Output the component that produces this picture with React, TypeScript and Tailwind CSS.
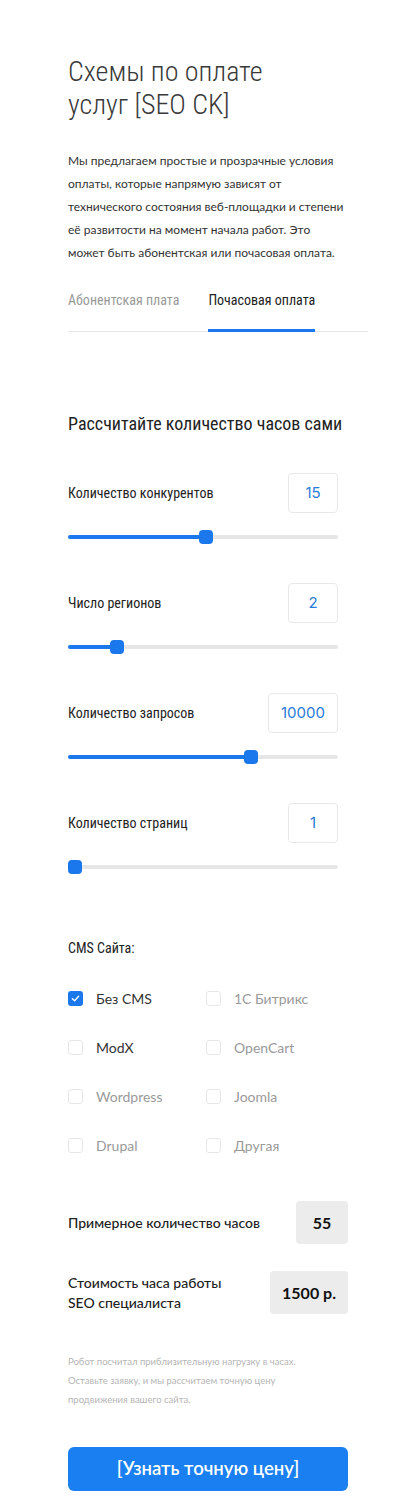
import { useState } from "react";

const cond = "font-['Liberation_Sans_Narrow','Roboto_Condensed',Roboto,sans-serif]";
const lato = "font-['Lato','Noto_Sans',sans-serif]";

interface SliderRowProps {
  label: string;
  value: string;
  pct: number;
  wide?: boolean;
}

const SliderRow: React.FC<SliderRowProps> = ({ label, value, pct, wide }) => (
  <div className="h-[110px] flex flex-col">
    <div className="flex items-center justify-between h-[40px]">
      <span className={`${cond} text-[14px] text-[#222]`}>{label}</span>
      <div
        className={`${wide ? "w-[70px]" : "w-[50px]"} h-[40px] border border-[#e8e8e8] rounded-[4px] flex items-center justify-center font-['Inter',sans-serif] text-[15px] text-[#2a7ad9]`}
      >
        {value}
      </div>
    </div>
    <div className="relative h-[14px] mt-[17px]">
      <div className="absolute left-0 right-0 top-[5px] h-[4px] bg-[#e6e6e6] rounded-full" />
      <div
        className="absolute left-0 top-[5px] h-[4px] bg-[#1a78ec] rounded-full"
        style={{ width: `${pct * 2.56 + 7}px` }}
      />
      <div
        className="absolute top-0 w-[14px] h-[14px] rounded-[4px] bg-[#1a78ec]"
        style={{ left: `${pct * 2.56}px` }}
      />
    </div>
  </div>
);

const Check: React.FC<{ label: string; checked?: boolean; dark?: boolean }> = ({ label, checked, dark }) => (
  <div className="flex items-center h-[49px]">
    {checked ? (
      <div className="w-[15px] h-[15px] rounded-[3px] bg-[#1a78ec] flex items-center justify-center">
        <svg width="9" height="9" viewBox="0 0 10 10" fill="none">
          <path d="M1.5 5.2 L4 7.5 L8.5 2.5" stroke="white" strokeWidth="1.5" strokeLinecap="round" strokeLinejoin="round" />
        </svg>
      </div>
    ) : (
      <div className="w-[15px] h-[15px] rounded-[3px] border border-[#e6e6e6] bg-white" />
    )}
    <span className={`${lato} ml-[13px] text-[14px] ${checked || dark ? "text-[#333]" : "text-[#9a9a9a]"}`}>{label}</span>
  </div>
);

export default function App() {
  const [tab] = useState("hour");
  return (
    <div className="w-[400px] min-h-[1500px] bg-white pl-[68px] pt-[55px]">
      <h1 className={`${cond} font-light text-[28px] leading-[33px] text-[#3a3a3a]`}>
        Схемы по оплате
        <br />
        услуг [SEO CK]
      </h1>

      <p className={`${lato} mt-[28px] w-[280px] text-[12px] leading-[23px] text-[#333]`}>
        Мы предлагаем простые и прозрачные условия оплаты, которые напрямую зависят от технического состояния веб-площадки и степени её развитости на момент начала работ. Это может быть абонентская или почасовая оплата.
      </p>

      {/* Tabs */}
      <div className="mt-[24px] w-[300px] border-b border-[#e6e6e6] flex">
        <div className={`${cond} text-[14px] text-[#9a9a9a] pb-[20px] pt-[2px]`}>Абонентская плата</div>
        <div
          className={`${cond} ml-[29px] text-[14px] text-[#222] pb-[18px] pt-[2px] border-b-[3px] mb-[-1px] ${
            tab === "hour" ? "border-[#1a78ec]" : "border-transparent"
          }`}
        >
          Почасовая оплата
        </div>
      </div>

      <h2 className={`${cond} mt-[80px] text-[18px] leading-[24px] text-[#222]`}>Рассчитайте количество часов сами</h2>

      <div className="w-[270px] mt-[37px]">
        <SliderRow label="Количество конкурентов" value="15" pct={51} />
        <SliderRow label="Число регионов" value="2" pct={16.4} />
        <SliderRow label="Количество запросов" value="10000" pct={68.75} wide />
        <SliderRow label="Количество страниц" value="1" pct={0} />
      </div>

      <div className={`${cond} mt-[25px] text-[14px] text-[#222]`}>CMS Сайта:</div>

      <div className="mt-[15px] grid grid-cols-[138px_1fr] w-[280px]">
        <Check label="Без CMS" checked />
        <Check label="1С Битрикс" />
        <Check label="ModX" dark />
        <Check label="OpenCart" />
        <Check label="Wordpress" />
        <Check label="Joomla" />
        <Check label="Drupal" />
        <Check label="Другая" />
      </div>

      <div className="w-[280px] mt-[31px] flex flex-col gap-[27px]">
        <div className="flex items-center justify-between">
          <span className={`${lato} font-medium text-[14px] text-[#222]`}>Примерное количество часов</span>
          <div className={`${lato} w-[52px] h-[43px] rounded-[4px] bg-[#ececec] flex items-center justify-center font-bold text-[16px] text-[#111]`}>
            55
          </div>
        </div>
        <div className="flex items-center justify-between">
          <span className={`${lato} font-medium text-[14px] leading-[20px] text-[#222]`}>
            Стоимость часа работы
            <br />
            SEO специалиста
          </span>
          <div className={`${lato} w-[78px] h-[43px] rounded-[4px] bg-[#ececec] flex items-center justify-center font-bold text-[16px] text-[#111]`}>
            1500 р.
          </div>
        </div>
      </div>

      <p className={`${lato} mt-[38px] w-[280px] text-[9.5px] leading-[19px] text-[#b5b5b5]`}>
        Робот посчитал приблизительную нагрузку в часах.
        <br />
        Оставьте заявку, и мы рассчитаем точную цену
        <br />
        продвижения вашего сайта.
      </p>

      <button
        className={`${lato} mt-[38px] w-[280px] h-[44px] rounded-[6px] bg-[#1a7ff0] text-white font-semibold text-[18.5px]`}
      >
        [Узнать точную цену]
      </button>
    </div>
  );
}
